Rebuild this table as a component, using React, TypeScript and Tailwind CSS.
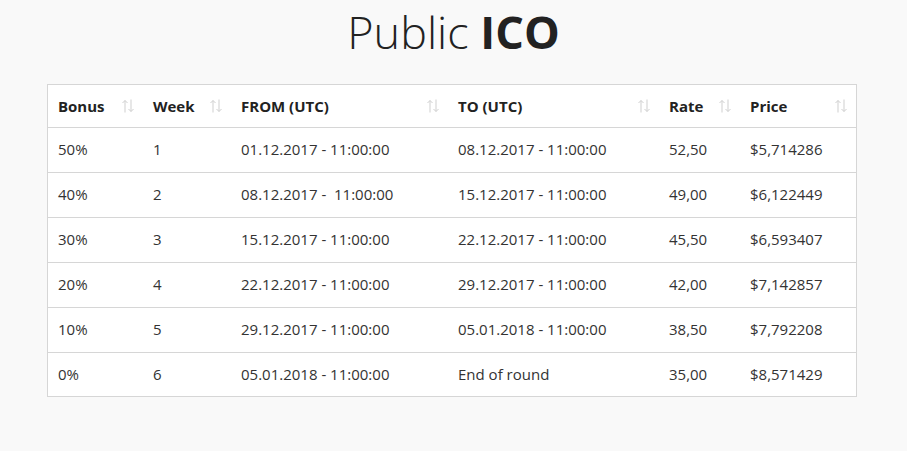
import React from 'react';

const columns = [
  { label: 'Bonus', width: 'w-[95px]' },
  { label: 'Week', width: 'w-[88px]' },
  { label: 'FROM (UTC)', width: 'w-[217px]' },
  { label: 'TO (UTC)', width: 'w-[211px]' },
  { label: 'Rate', width: 'w-[81px]' },
  { label: 'Price', width: '' },
];

const rows = [
  ['50%', '1', '01.12.2017 - 11:00:00', '08.12.2017 - 11:00:00', '52,50', '$5,714286'],
  ['40%', '2', '08.12.2017 -  11:00:00', '15.12.2017 - 11:00:00', '49,00', '$6,122449'],
  ['30%', '3', '15.12.2017 - 11:00:00', '22.12.2017 - 11:00:00', '45,50', '$6,593407'],
  ['20%', '4', '22.12.2017 - 11:00:00', '29.12.2017 - 11:00:00', '42,00', '$7,142857'],
  ['10%', '5', '29.12.2017 - 11:00:00', '05.01.2018 - 11:00:00', '38,50', '$7,792208'],
  ['0%', '6', '05.01.2018 - 11:00:00', 'End of round', '35,00', '$8,571429'],
];

// faded up/down arrows like the datatables sort marker
const SortIcon = () => (
  <svg width="14" height="16" viewBox="0 0 14 16" fill="none" stroke="#cfcfcf" strokeWidth="1">
    <path d="M4 2.5v12M1.5 5l2.5-2.5L6.5 5" />
    <path d="M10 1.5v12M7.5 11l2.5 2.5L12.5 11" />
  </svg>
);

export default function App() {
  return (
    <div className="min-h-[451px] w-full bg-[#f9f9f9] text-[#333] font-['Open_Sans',sans-serif] pt-[1px]">
      <h1 className="text-center text-[45px] leading-[60px] text-[#222] mt-[1px]">
        <span className="font-light">Public </span>
        <span className="font-bold">ICO</span>
      </h1>
      <div className="mx-[47px] mt-[22px] w-[810px] border border-[#d6d6d6] bg-white">
        <table className="w-full border-collapse text-[15px]">
          <thead>
            <tr className="h-[42px]">
              {columns.map((c) => (
                <th key={c.label} className={`${c.width} pl-[10px] pr-[8px] text-left font-bold text-[#222]`}>
                  <div className="flex items-center justify-between">
                    <span>{c.label}</span>
                    <SortIcon />
                  </div>
                </th>
              ))}
            </tr>
          </thead>
          <tbody>
            {rows.map((r, i) => (
              <tr key={i} className={`${i === rows.length - 1 ? 'h-[44px]' : 'h-[45px]'} border-t border-[#d6d6d6]`}>
                {r.map((cell, j) => (
                  <td key={j} className="pl-[10px] whitespace-pre text-[#333]">
                    {cell}
                  </td>
                ))}
              </tr>
            ))}
          </tbody>
        </table>
      </div>
    </div>
  );
}
